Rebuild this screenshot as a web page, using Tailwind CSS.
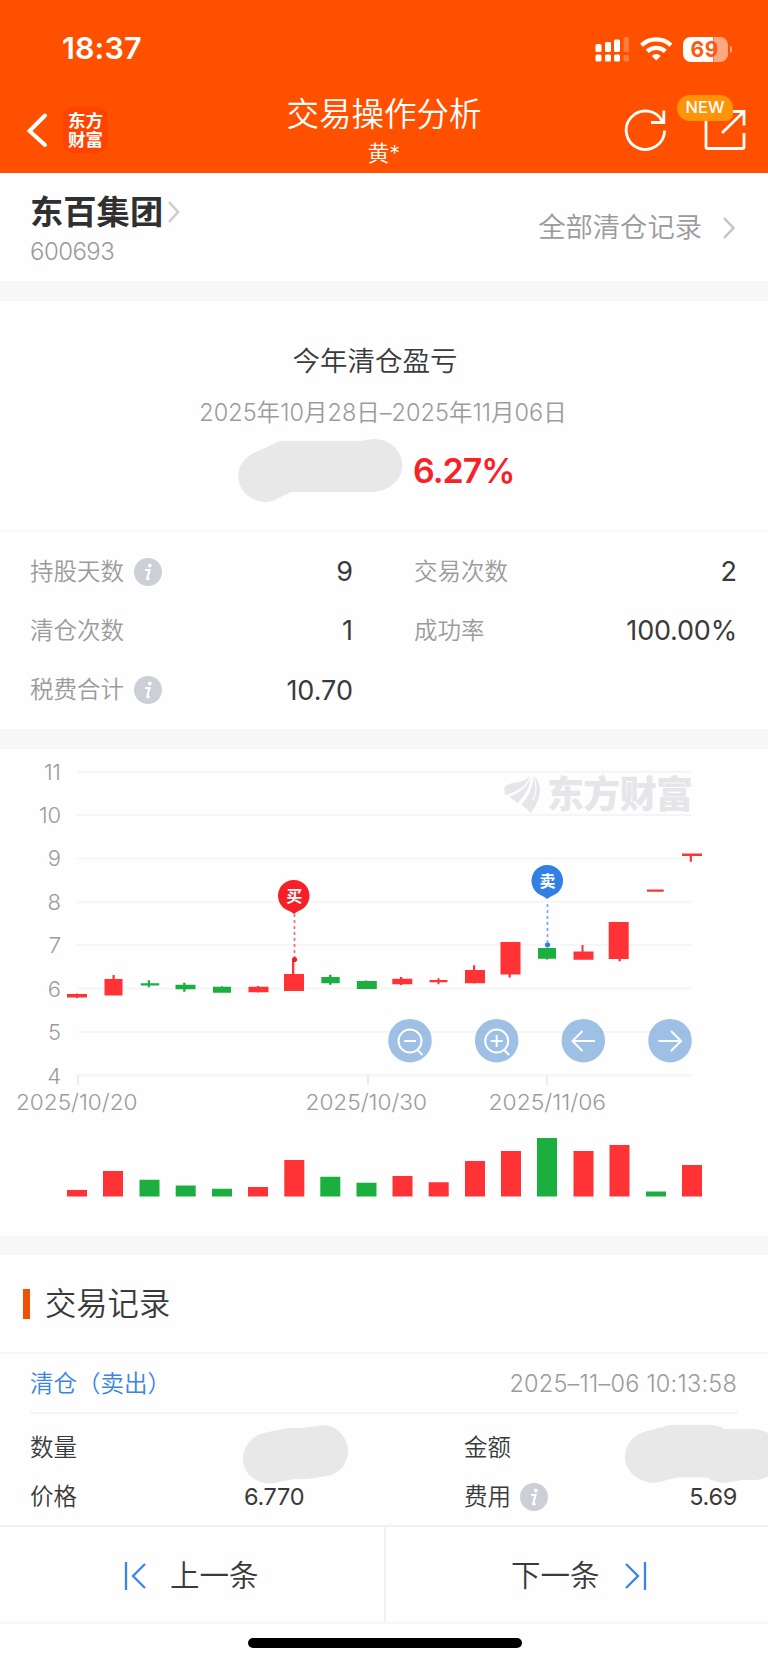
<!DOCTYPE html>
<html lang="zh-CN">
<head>
<meta charset="utf-8">
<title>交易操作分析</title>
<script src="https://cdn.jsdelivr.net/npm/@tailwindcss/browser@4"></script>
</head>
<body class="bg-white">
<div class="w-[768px] h-[1664px] overflow-hidden flex flex-col bg-[#fefefe] text-[#3a3a3a] font-['Inter','Noto_Sans_CJK_SC',sans-serif] text-[23.5px] leading-none whitespace-nowrap">

  <!-- Header -->
  <header class="h-[173px] shrink-0 bg-[#ff5000] text-white flex flex-col">
    <div class="h-[97px] pl-[62px] pr-[36px] flex items-center justify-between">
      <span class="text-[30.5px] font-semibold tracking-[0.1px]">18:37</span>
      <svg class="w-[138px] h-[28px]" viewBox="0 0 138 28" fill="#fff">
        <rect x="1.5" y="9" width="6" height="8" rx="1.5"/><rect x="11" y="7" width="6" height="10" rx="1.5"/><rect x="20" y="4.500" width="6" height="12.500" rx="1.5"/><rect x="29.500" y="2" width="5.500" height="15" rx="1.5" opacity=".25"/>
        <rect x="1.5" y="19.500" width="6" height="7" rx="1.5"/><rect x="11" y="19.500" width="6" height="7" rx="1.5"/><rect x="20" y="19.500" width="6" height="7" rx="1.5"/><rect x="29.500" y="20" width="5.500" height="6.500" rx="1.5" opacity=".25"/>
        <g fill="none" stroke="#fff" stroke-width="4.300"><path d="M47.500 10.300a21.500 21.500 0 0 1 29.500 0"/><path d="M53.200 16.400a13.200 13.200 0 0 1 18.100 0"/></g>
        <path d="M62.250 25.500l-4.500-4.600a6.500 6.500 0 0 1 9 0z"/>
        <path d="M97 2h22v25H97a8 8 0 0 1-8-8V9a7.500 7.500 0 0 1 8-7z"/>
        <path d="M119.500 2h7a8 8 0 0 1 7.500 7v10a8 8 0 0 1-7.500 8h-7z" opacity=".5"/>
        <path d="M136 11c3 1 3 6 0 7z" opacity=".5"/>
        <text x="110.500" y="22" text-anchor="middle" textLength="28" font-size="21" font-weight="700" fill="#ff5a10">69</text>
      </svg>
    </div>
    <div class="h-[76px] grid grid-cols-[200px_1fr_200px]">
      <div class="flex items-start pl-[26px] pt-[10px] gap-[15px]">
        <svg class="w-[22px] h-[46px]" viewBox="0 0 22 46" fill="none" stroke="#fff" stroke-width="4" stroke-linecap="round"><path d="M19 8.500 3.500 24 19 38"/></svg>
        <div class="w-[45px] h-[46px] rounded-[10px] bg-[#ff4300] flex flex-col items-center justify-center text-[17.5px] font-bold leading-[19px]"><span>东方</span><span>财富</span></div>
      </div>
      <div class="flex flex-col items-center pt-[1px]">
        <h1 class="text-[32.5px] leading-[34px] font-[350]">交易操作分析</h1>
        <span class="text-[21.5px] leading-[22px] mt-[10px] font-[350]">黄*</span>
      </div>
      <div class="relative flex items-start pl-[56px] pt-[8px]">
        <svg class="w-[128px] h-[50px]" viewBox="0 0 128 50" fill="none" stroke="#fff" stroke-width="2.800"><path d="M40.600 25.500A19.200 19.200 0 1 1 38.500 16.500"/><path d="M39.800 5.500v12H27"/><path d="M82 14v28.500q0 1 1 1h36q1 0 1-1V28M106 6.500h14V20.500M119.500 7 98 28"/></svg>
        <div class="absolute left-[109px] -top-[2.5px] w-[56px] h-[26px] rounded-[13px_13px_7px_13px] bg-[#ff9408] flex items-center justify-center text-[16.500px] font-medium">NEW</div>
      </div>
    </div>
  </header>

  <!-- Stock -->
  <section class="h-[108px] shrink-0 pl-[30px] pr-[32px] flex justify-between">
    <div class="pt-[21px]">
      <div class="flex items-center"><h2 class="text-[33.3px] leading-[36px] font-semibold text-[#303030]">东百集团</h2>
        <svg class="w-[14px] h-[24px] ml-[4px]" viewBox="0 0 14 24" fill="none" stroke="#ccc" stroke-width="2.5"><path d="M2 2l9 10-9 10"/></svg></div>
      <div class="mt-[10px] text-[24px] leading-[24px] tracking-[-0.55px] text-[#9b9b9b] font-[350]">600693</div>
    </div>
    <div class="flex items-center text-[27.3px] pt-[1px] text-[#9b9b9b] font-[350]">全部清仓记录
      <svg class="w-[15px] h-[22px] ml-[19px]" viewBox="0 0 15 22" fill="none" stroke="#c4c4c4" stroke-width="2.500"><path d="M3 1l9.500 10L3 21"/></svg></div>
  </section>
  <div class="h-[20px] shrink-0 bg-[#f7f7f7]"></div>

  <!-- Profit summary -->
  <section class="h-[231px] shrink-0 border-b-2 border-[#f7f7f7] flex flex-col items-center pt-[46px]">
    <h3 class="text-[27.5px] leading-[28px] font-[350] pr-[18px]">今年清仓盈亏</h3>
    <div class="mt-[26px] text-[23.5px] leading-[24px] tracking-[0.02px] text-[#9b9b9b] font-[350] pr-[2px]">2025年10月28日–2025年11月06日</div>
    <div class="mt-[13px] w-[768px] flex items-center pl-[237px]">
      <svg class="w-[166px] h-[65px]" viewBox="0 0 166 65" fill="#e8e8e8"><path d="M43 3h80l13-2c15-1 29 11 29.500 26 0 12-9 21-19 25l-8 2H54L35 63c-15 4-30-6-33-19C-1 31 6 21 15 16z"/></svg>
      <span class="ml-[10px] text-[34px] font-semibold tracking-[-1px] text-[#f72228]">6.27%</span>
    </div>
  </section>

  <!-- Statistics -->
  <section class="h-[197px] shrink-0 pt-[10px] pl-[30px] pr-[31px] grid grid-cols-[323px_323px] gap-x-[61px] auto-rows-[59.300px] items-center text-[#9b9b9b] font-[350]">
    <div class="flex items-center">持股天数<svg class="w-[28px] h-[28px] ml-[10px]" viewBox="0 0 28 28"><circle cx="14" cy="14" r="14" fill="#cdcfd6"/><path d="M11 12h4.500l-2.300 8.500q-.3 1.500 2.300 0" fill="none" stroke="#fff" stroke-width="2.200"/><circle cx="15.800" cy="7.500" r="1.900" fill="#fff"/></svg><b class="ml-auto font-normal text-[27px] text-[#3a3a3a]">9</b></div>
    <div class="flex items-center justify-between">交易次数<b class="font-normal text-[27px] text-[#3a3a3a]">2</b></div>
    <div class="flex items-center justify-between">清仓次数<b class="font-normal text-[27px] text-[#3a3a3a]">1</b></div>
    <div class="flex items-center justify-between">成功率<b class="font-normal text-[27px] tracking-[-0.2px] text-[#3a3a3a]">100.00%</b></div>
    <div class="flex items-center">税费合计<svg class="w-[28px] h-[28px] ml-[10px]" viewBox="0 0 28 28"><circle cx="14" cy="14" r="14" fill="#cdcfd6"/><path d="M11 12h4.500l-2.300 8.500q-.3 1.500 2.300 0" fill="none" stroke="#fff" stroke-width="2.200"/><circle cx="15.800" cy="7.500" r="1.900" fill="#fff"/></svg><b class="ml-auto font-normal text-[27px] tracking-[0px] text-[#3a3a3a]">10.70</b></div>
  </section>
  <div class="h-[20px] shrink-0 bg-[#f7f7f7]"></div>

  <!-- Candlestick and volume chart -->
  <svg class="w-[768px] h-[487px] shrink-0 block" viewBox="0 749 768 487">
    <path d="M77.500 771.700H691M77.500 815H691M77.500 858.400H691M77.500 901.700H691M77.500 945.100H691M77.500 988.500H691M77.500 1031.900H691M77.500 1075.300H691" stroke="#f5f5f5" stroke-width="2"/>
    <path d="M78 1075v10M368 1075v10M547 1075v10" stroke="#ececec" stroke-width="2"/>
    <g fill="#9b9b9b" font-size="22" font-weight="350" text-anchor="end">
      <text x="61" y="779.500" textLength="17">11</text><text x="61" y="823" textLength="22">10</text><text x="61" y="866.300">9</text><text x="61" y="909.700">8</text><text x="61" y="953">7</text><text x="61" y="996.500">6</text><text x="61" y="1040">5</text><text x="61" y="1083.500">4</text>
    </g>
    <g fill="#9b9b9b" font-size="22" font-weight="350">
      <text x="16" y="1110.300" textLength="121.500" lengthAdjust="spacingAndGlyphs">2025/10/20</text><text x="305.500" y="1110.300" textLength="121.500" lengthAdjust="spacingAndGlyphs">2025/10/30</text><text x="488.500" y="1110.300" textLength="117.500" lengthAdjust="spacingAndGlyphs">2025/11/06</text>
    </g>
    <!-- Watermark -->
    <g fill="#e5e5ea">
      <path d="M504.300 787.500q4-4.500 12-5t13.500-6.500q-2.500 8-9.500 12.500-7 5-15.500 6.500z"/>
      <path d="M531 776.500q-1.500 15-13.500 26.500l-8-6.500q17-6 21.500-20z"/>
      <path d="M533.500 774.800q8.500 9 6 21-2.500 9-9 17.500-3.500-5-9-8.500 12-14 12-30z"/>
      <text x="547" y="808" font-size="37" font-weight="900" textLength="146">东方财富</text>
    </g>
    <path d="M533 775q6 13 0 25" fill="none" stroke="#fefefe" stroke-width="1.200"/>
    <g fill="#ff3336">
      <path d="M67 994h20v3.500H67zM76 993.500h2v4.500h-2z"/>
      <path d="M104.500 979h18v16.500h-18zM112.500 975h2.200v5h-2.200z"/>
      <path d="M248.500 986.700h20v5.500h-20zM257 986h2v6.500h-2z"/>
      <path d="M284 974h20v17h-20zM292 960.500h2.300V975H292z"/>
      <path d="M392.300 978.800h20v5.500h-20zM400 977h2.300v8H400z"/>
      <path d="M429.500 980h18v2.300h-18zM437.500 978.300h2v6h-2z"/>
      <path d="M465 970h20v13.300h-20zM473 965.300h2.200v18.200H473z"/>
      <path d="M500.500 942h20v32.500h-20zM508.500 974h2.300v3.500h-2.300z"/>
      <path d="M573.500 951.500h20v8.300h-20zM581.500 945h2v7h-2z"/>
      <path d="M608.700 922h20v37h-20zM618.500 958h2.300v3.300h-2.300z"/>
      <path d="M647 889.500h16.700v2.300H647zM682 853.500h20v2.500h-20zM689.700 855h2.200v6.700h-2.200z"/>
    </g>
    <g fill="#1baf40">
      <path d="M140.700 983.200h18.500v2.300h-18.500zM147.700 980.300h2.300v7h-2.300z"/>
      <path d="M175.500 984.700h20v4.500h-20zM183.200 982.700h2.300v9h-2.300z"/>
      <path d="M213 986.700h18v6h-18zM221 986.200h2v1h-2z"/>
      <path d="M321.300 977h18.400v6.200h-18.400zM329 974.700h2.500v10H329z"/>
      <path d="M356.800 981h20v8h-20zM365 980.500h2v1h-2z"/>
      <path d="M538 948h18v10.700h-18zM546 958h2v1.500h-2z"/>
    </g>
    <!-- Buy and sell markers -->
    <path d="M294.500 914v44" stroke="#f76a6e" stroke-width="1.700" stroke-dasharray="3 3"/>
    <circle cx="294.500" cy="959.500" r="2.600" fill="#f02028"/>
    <path d="M286 909.500a15.800 15.800 0 1 1 15.500 0q-4 1.800-7.500 4.500-3.500-2.700-8-4.500z" fill="#f72026"/>
    <text x="294.300" y="902" text-anchor="middle" font-size="16" font-weight="600" fill="#fff">买</text>
    <path d="M547.500 904v38" stroke="#78aae9" stroke-width="1.700" stroke-dasharray="3 3"/>
    <circle cx="547.500" cy="944.800" r="2.600" fill="#2f80e4"/>
    <path d="M539.500 894.500a15.800 15.800 0 1 1 15.500 0q-4 1.800-8 4.500-3.500-2.700-7.500-4.500z" fill="#3280e4"/>
    <text x="547.500" y="887.300" text-anchor="middle" font-size="16" font-weight="600" fill="#fff">卖</text>
    <!-- Zoom and scroll controls -->
    <g fill="#9fc0e5"><circle cx="410" cy="1040.700" r="21.800"/><circle cx="496.700" cy="1040.700" r="21.800"/><circle cx="583.300" cy="1040.700" r="21.800"/><circle cx="670" cy="1040.700" r="21.800"/></g>
    <path d="M390 1031.900h40M477 1031.900h40M563 1031.900h40M650 1031.900h40" stroke="#98bae0" stroke-width="1.500" opacity=".6"/>
    <g fill="none" stroke="#fff" stroke-width="2"><circle cx="410" cy="1041" r="11.500"/><path d="M404 1041h12M417 1049.500l5.500 5.500"/><circle cx="496.700" cy="1041" r="11.500"/><path d="M490.700 1041h12M496.700 1035v12M503.700 1049.500l5.500 5.500"/><path d="M595 1041h-22.500M582.500 1031l-10 10 10 10M658.500 1041H681M671 1031l10 10-10 10"/></g>
    <!-- Volume bars -->
    <path fill="#ff3336" d="M67 1190h20v6.600H67zM103 1171h20v25.600h-20zM248 1187h20v9.600h-20zM284.300 1160h20v36.600h-20zM392.500 1176h20v20.600h-20zM428.700 1182.300h20v14.300h-20zM465 1161h20v35.600h-20zM501 1151h20v45.600h-20zM573.500 1151h20v45.600h-20zM609.500 1145h20v51.600h-20zM682 1165h20v31.600h-20z"/>
    <path fill="#1baf40" d="M139.500 1179.800h20v16.800h-20zM175.700 1185.600h20v11h-20zM212 1188.700h20v7.900h-20zM320.300 1176.700h20v19.900h-20zM356.500 1182.700h20v13.900h-20zM537 1138h20v58.600h-20zM646 1191.600h20v5h-20z"/>
  </svg>
  <div class="h-[19px] shrink-0 bg-[#f7f7f7]"></div>

  <!-- Trade records -->
  <section class="h-[272px] shrink-0 border-b-2 border-[#f1f1f1]">
    <div class="h-[99px] border-b-2 border-[#f5f5f5] flex items-center pl-[23px]"><i class="w-[7px] h-[30px] bg-[#f05000] mr-[15px]"></i><h3 class="text-[31.3px] leading-[34px] font-[350]">交易记录</h3></div>
    <div class="h-[60px] mx-[30px] pt-[2px] pr-[1px] border-b-2 border-[#f5f5f5] flex items-center justify-between"><span class="text-[#3a84e4] font-[350]">清仓（卖出）</span><span class="text-[#9b9b9b] font-[350] tracking-[0.22px]">2025–11–06 10:13:58</span></div>
    <div class="pl-[30px] pt-[9px] grid grid-cols-[212px_222px_161px_143px] auto-rows-[49px] items-center font-[350]">
      <span>数量</span>
      <svg class="w-[107px] h-[60px] mt-[12px]" viewBox="0 0 107 60" fill="#e8e8e8"><path d="M45 4h15l18-2.500c15-2 28 11 28 25.500 0 13-9 23-21 25l-19 3H52L32 59C16 62 1 50 1 35 1 23 9 12 22 9z"/></svg>
      <span>金额</span>
      <svg class="w-[143px] h-[60px] mt-[12px]" viewBox="0 0 143 60" fill="#e8e8e8"><path d="M45 1h40q8 0 14 4h28q9 0 16 4v43q-6 4-13 4h-12l-16 2.500q-12 1-20-5H52l-20 5C16 60 0 49 0 33 0 20 9 10 22 7z"/></svg>
      <span>价格</span>
      <span class="pl-[2px] tracking-[-0.3px] font-normal">6.770</span>
      <span class="flex items-center">费用<svg class="w-[28px] h-[28px] ml-[9px]" viewBox="0 0 28 28"><circle cx="14" cy="14" r="14" fill="#cdcfd6"/><path d="M11 12h4.500l-2.300 8.500q-.3 1.500 2.300 0" fill="none" stroke="#fff" stroke-width="2.200"/><circle cx="15.800" cy="7.500" r="1.900" fill="#fff"/></svg></span>
      <span class="pr-[31px] text-right tracking-[-0.3px] font-normal">5.69</span>
    </div>
  </section>

  <!-- Pager -->
  <nav class="h-[97px] shrink-0 grid grid-cols-[386px_382px] border-b-2 border-[#f7f7f7] text-[29.500px] font-[350]">
    <div class="border-r-2 border-[#f1f1f1] flex items-center pl-[124px] pt-[2px]"><svg class="w-[23px] h-[28px] mr-[23px]" viewBox="0 0 23 28" fill="none" stroke="#3a84e4" stroke-width="2.300"><path d="M2 0v28M21 2 9 14l12 12"/></svg>上一条</div>
    <div class="flex items-center pl-[125px] pt-[2px]">下一条<svg class="w-[23px] h-[28px] ml-[24px]" viewBox="0 0 23 28" fill="none" stroke="#3a84e4" stroke-width="2.300"><path d="M21 0v28M2 2l12 12L2 26"/></svg></div>
  </nav>
  <div class="pt-[14px] flex justify-center pl-[2px]"><div class="w-[274px] h-[10px] rounded-full bg-black"></div></div>
</div>
</body>
</html>
